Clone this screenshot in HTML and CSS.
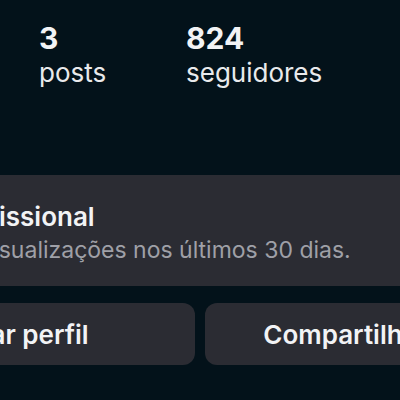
FILE: index.html
```html
<!DOCTYPE html>
<html lang="pt-BR">
<head>
<meta charset="utf-8">
<title>Perfil</title>
<link rel="stylesheet" href="styles.css">
</head>
<body>
<main class="screen">
  <section class="stats">
    <div class="stat">
      <span class="stat-num">3</span>
      <span class="stat-label">posts</span>
    </div>
    <div class="stat">
      <span class="stat-num">824</span>
      <span class="stat-label">seguidores</span>
    </div>
    <div class="stat">
      <span class="stat-num">512</span>
      <span class="stat-label">seguindo</span>
    </div>
  </section>

  <section class="dash">
    <div class="dash-title">Painel profissional</div>
    <div class="dash-sub">1,2 mil visualizações nos últimos 30 dias.</div>
  </section>

  <section class="actions">
    <button class="btn btn-edit">Editar perfil</button>
    <button class="btn">Compartilhar perfil</button>
  </section>
</main>
</body>
</html>
```

FILE: styles.css
```css
html, body {
  margin: 0;
  padding: 0;
  background: #03121a;
  overflow: hidden;
  width: 400px;
  height: 400px;
}

.screen {
  margin-left: -160px;
  width: 760px;
  font-family: Inter, "Liberation Sans", sans-serif;
  color: #f2f3f5;
  padding-top: 21px;
}

.stats {
  display: grid;
  grid-template-columns: 147px 214px auto;
  padding-left: 199px;
}

.stat {
  display: flex;
  flex-direction: column;
}

.stat-num {
  font-size: 30px;
  font-weight: 700;
  line-height: 34px;
}

.stat-label {
  font-size: 26px;
  font-weight: 400;
  line-height: 30px;
  margin-top: 3px;
  color: #e9eaec;
}

.dash {
  margin-top: 87px;
  height: 111px;
  box-sizing: border-box;
  background: #2b2c33;
  padding: 27px 0 0 24px;
}

.dash-title {
  font-size: 26px;
  font-weight: 600;
  line-height: 30px;
}

.dash-sub {
  font-size: 23px;
  font-weight: 400;
  line-height: 30px;
  color: #9fa0a7;
  margin-top: 3px;
  margin-left: 42px;
}

.actions {
  display: flex;
  gap: 10px;
  margin-top: 17px;
}

.btn {
  width: 354px;
  height: 62px;
  border: none;
  border-radius: 12px;
  background: #2b2c33;
  color: #f2f3f5;
  font-family: Inter, "Liberation Sans", sans-serif;
  font-size: 26px;
  font-weight: 600;
  padding: 0;
}

.btn-edit {
  width: 355px;
  padding-right: 4px;
}
```
